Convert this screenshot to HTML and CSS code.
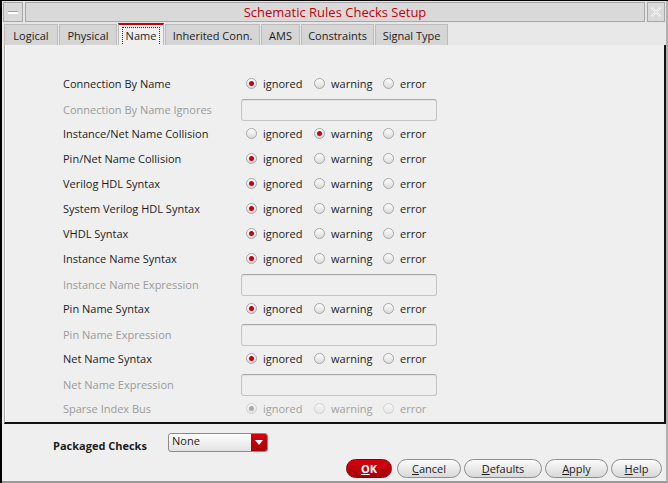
FILE: index.html
```html
<!DOCTYPE html>
<html>
<head>
<meta charset="utf-8">
<link rel="stylesheet" href="styles.css">
</head>
<body>
<div class="win">
  <div class="titlebar">
    <div class="tb-btn tb-min"><span class="min-glyph"></span></div>
    <div class="tb-title">Schematic Rules Checks Setup</div>
    <div class="tb-btn tb-close">
      <svg width="12" height="12" viewBox="0 0 12 12"><path d="M1.5 1.5L10.5 10.5M10.5 1.5L1.5 10.5" stroke="#f4f4f4" stroke-width="2" fill="none"/><path d="M1.5 1.5L10.5 10.5M10.5 1.5L1.5 10.5" stroke="#c6c6c6" stroke-width="0.7" fill="none" stroke-dasharray="1.2 1.2"/></svg>
    </div>
  </div>
  <div class="tabs">
    <div class="tab t-logical">Logical</div>
    <div class="tab t-physical">Physical</div>
    <div class="tab t-name active"><span class="focus">Name</span></div>
    <div class="tab t-inherited">Inherited Conn.</div>
    <div class="tab t-ams">AMS</div>
    <div class="tab t-constraints">Constraints</div>
    <div class="tab t-signal">Signal Type</div>
  </div>
  <div class="panel">
    <div class="rows">
      <div class="row"><div class="label">Connection By Name</div><div class="opts"><div class="opt"><span class="radio on"></span>ignored</div><div class="opt"><span class="radio"></span>warning</div><div class="opt"><span class="radio"></span>error</div></div></div>
      <div class="row irow"><div class="label dis">Connection By Name Ignores</div><div class="field"></div></div>
      <div class="row"><div class="label">Instance/Net Name Collision</div><div class="opts"><div class="opt"><span class="radio"></span>ignored</div><div class="opt"><span class="radio on"></span>warning</div><div class="opt"><span class="radio"></span>error</div></div></div>
      <div class="row"><div class="label">Pin/Net Name Collision</div><div class="opts"><div class="opt"><span class="radio on"></span>ignored</div><div class="opt"><span class="radio"></span>warning</div><div class="opt"><span class="radio"></span>error</div></div></div>
      <div class="row"><div class="label">Verilog HDL Syntax</div><div class="opts"><div class="opt"><span class="radio on"></span>ignored</div><div class="opt"><span class="radio"></span>warning</div><div class="opt"><span class="radio"></span>error</div></div></div>
      <div class="row"><div class="label">System Verilog HDL Syntax</div><div class="opts"><div class="opt"><span class="radio on"></span>ignored</div><div class="opt"><span class="radio"></span>warning</div><div class="opt"><span class="radio"></span>error</div></div></div>
      <div class="row"><div class="label">VHDL Syntax</div><div class="opts"><div class="opt"><span class="radio on"></span>ignored</div><div class="opt"><span class="radio"></span>warning</div><div class="opt"><span class="radio"></span>error</div></div></div>
      <div class="row"><div class="label">Instance Name Syntax</div><div class="opts"><div class="opt"><span class="radio on"></span>ignored</div><div class="opt"><span class="radio"></span>warning</div><div class="opt"><span class="radio"></span>error</div></div></div>
      <div class="row irow"><div class="label dis">Instance Name Expression</div><div class="field"></div></div>
      <div class="row"><div class="label">Pin Name Syntax</div><div class="opts"><div class="opt"><span class="radio on"></span>ignored</div><div class="opt"><span class="radio"></span>warning</div><div class="opt"><span class="radio"></span>error</div></div></div>
      <div class="row irow"><div class="label dis">Pin Name Expression</div><div class="field"></div></div>
      <div class="row"><div class="label">Net Name Syntax</div><div class="opts"><div class="opt"><span class="radio on"></span>ignored</div><div class="opt"><span class="radio"></span>warning</div><div class="opt"><span class="radio"></span>error</div></div></div>
      <div class="row irow"><div class="label dis">Net Name Expression</div><div class="field"></div></div>
      <div class="row disrow"><div class="label dis">Sparse Index Bus</div><div class="opts"><div class="opt"><span class="radio on"></span>ignored</div><div class="opt"><span class="radio"></span>warning</div><div class="opt"><span class="radio"></span>error</div></div></div>
    </div>
  </div>
  <div class="footer">
    <div class="pkg">
      <div class="pkg-label">Packaged Checks</div>
      <div class="combo"><span class="combo-text">None</span><span class="combo-btn"><svg width="8" height="5" viewBox="0 0 8 5"><path d="M0 0H8L4 5Z" fill="#fff"/></svg></span></div>
    </div>
    <div class="buttons">
      <div class="btn ok"><u>O</u>K</div>
      <div class="btn b-cancel"><u>C</u>ancel</div>
      <div class="btn b-defaults"><u>D</u>efaults</div>
      <div class="btn b-apply"><u>A</u>pply</div>
      <div class="btn b-help"><u>H</u>elp</div>
    </div>
  </div>
</div>
</body>
</html>
```

FILE: styles.css
```css
html, body {
  margin: 0;
  padding: 0;
  background: #000;
  width: 668px;
  height: 483px;
  overflow: hidden;
}
body {
  font-family: "Open Sans", "DejaVu Sans", sans-serif;
  font-size: 11px;
  color: #1c1c1c;
}
.win {
  margin: 1px 0 0 2px;
  width: 666px;
  height: 482px;
  box-sizing: border-box;
  background: #ececec;
  border-bottom: 2px solid #9a9a9a;
  border-right: 2px solid #b0b0b0;
  display: flex;
  flex-direction: column;
}
.titlebar {
  height: 22px;
  display: flex;
  gap: 2px;
  padding: 1px 1px 0 1px;
  box-sizing: border-box;
  background: #e4e4e4;
}
.tb-btn, .tb-title {
  border: 1px solid #a8a8a8;
  background: #d9d9d9;
  box-sizing: border-box;
  height: 20px;
}
.tb-min {
  width: 20px;
  display: flex;
  align-items: center;
  justify-content: center;
}
.min-glyph {
  width: 10px;
  height: 2px;
  background: #fff;
  border-top: 1px solid #a0a0a0;
}
.tb-title {
  flex: 1;
  text-align: center;
  color: #c4000b;
  font-size: 13px;
  line-height: 18px;
}
.tb-close {
  width: 18px;
  display: flex;
  align-items: center;
  justify-content: center;
}
.tabs {
  display: flex;
  height: 22px;
  padding-left: 2px;
  gap: 1px;
  background: #e8e8e8;
}
.tab {
  background: #d5d5d5;
  border: 1px solid #bcbcbc;
  border-bottom: none;
  line-height: 21px;
  margin-top: 1px;
  box-sizing: border-box;
  height: 21px;
  text-align: center;
  color: #1c1c1c;
}
.t-logical { width: 54px; }
.t-physical { width: 58px; }
.t-name { width: 46px; }
.t-inherited { width: 95px; }
.t-ams { width: 39px; }
.t-constraints { width: 73px; }
.t-signal { width: 73px; }
.tab.active {
  background: #efefef;
  border-top: 2px solid #c4000b;
  margin-top: 0;
  height: 22px;
  padding-top: 2px;
  line-height: 17px;
}
.focus {
  display: inline-block;
  border: 1px dotted #333;
  padding: 0 3px;
  line-height: 16px;
  height: 17px;
}
.panel {
  height: 379px;
  margin-left: 2px;
  box-sizing: border-box;
  background: #efefef;
  border-left: 1px solid #a8a8a8;
  border-right: 2px solid #111;
  border-bottom: 2px solid #111;
  box-shadow: inset 1px 0 0 #fff;
  padding: 26px 0 0 58px;
}
.rows {
  display: flex;
  flex-direction: column;
}
.row {
  display: grid;
  grid-template-columns: 178px auto;
  height: 25px;
  align-items: center;
}
.irow {
  align-items: start;
  padding-top: 3px;
  box-sizing: border-box;
}
.irow .label {
  line-height: 22px;
}
.label.dis {
  color: #9a9a9a;
}
.field {
  width: 196px;
  height: 22px;
  box-sizing: border-box;
  border: 1px solid #c4c4c4;
  border-top-color: #a8a8a8;
  border-radius: 3px;
  background: #efefef;
  box-shadow: inset 0 1px 1px rgba(0,0,0,0.06);
}
.opts {
  display: flex;
  padding-left: 5px;
}
.opt {
  display: flex;
  align-items: center;
  gap: 6px;
  width: 68px;
}
.opt:nth-child(2) {
  width: 69px;
}
.radio {
  width: 11px;
  height: 11px;
  box-sizing: border-box;
  border-radius: 50%;
  border: 1px solid #a6a6a6;
  background: linear-gradient(#fdfdfd, #dcdcdc);
  display: flex;
  align-items: center;
  justify-content: center;
}
.radio.on::after {
  content: "";
  width: 5px;
  height: 5px;
  border-radius: 50%;
  background: #c8000a;
}
.disrow .opt {
  color: #a0a0a0;
}
.disrow .radio {
  border-color: #cfcfcf;
  background: linear-gradient(#f7f7f7, #e6e6e6);
}
.disrow .radio.on::after {
  background: #a8a8a8;
}
.footer {
  flex: 1;
  background: #efefef;
  display: flex;
  flex-direction: column;
  padding: 8px 4px 0 0;
}
.pkg {
  display: flex;
  align-items: center;
  padding-left: 51px;
  height: 20px;
}
.pkg-label {
  font-weight: bold;
  width: 115px;
  padding-top: 6px;
}
.combo {
  width: 100px;
  height: 19px;
  box-sizing: border-box;
  border: 1px solid #8a8a8a;
  border-radius: 3px;
  background: linear-gradient(#ffffff, #e2e2e2);
  display: flex;
  overflow: hidden;
}
.combo-text {
  flex: 1;
  padding-left: 3px;
  line-height: 14px;
}
.combo-btn {
  width: 16px;
  background: linear-gradient(#d6000f, #a80008);
  display: flex;
  align-items: center;
  justify-content: center;
}
.buttons {
  display: flex;
  justify-content: flex-end;
  gap: 3px;
  margin-top: 7px;
}
.btn {
  height: 19px;
  box-sizing: border-box;
  border: 1px solid #8e8e8e;
  border-radius: 10px;
  background: linear-gradient(#fbfbfb, #d9d9d9);
  line-height: 17px;
  text-align: center;
  color: #1c1c1c;
}
.b-cancel { width: 64px; }
.b-defaults { width: 78px; }
.b-apply { width: 63px; }
.b-help { width: 51px; }
.btn.ok {
  background: linear-gradient(#d8000c, #a30007);
  border-color: #8a0006;
  color: #fff;
  font-weight: bold;
  width: 46px;
  margin-right: 2px;
}
```
